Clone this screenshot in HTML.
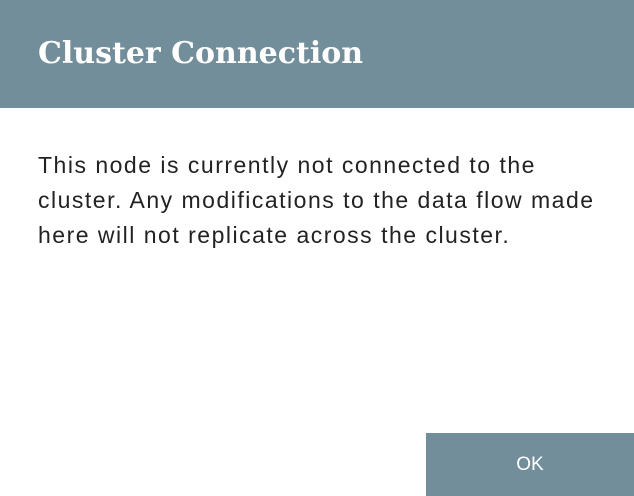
<!DOCTYPE html>
<html><head><style>
html,body{margin:0;padding:0;width:634px;height:496px;overflow:hidden;background:#fff;}
.hdr{position:absolute;left:0;top:0;width:634px;height:108px;background:#728e9b;}
.hdr h1{margin:0;position:absolute;left:38px;top:34px;font-family:"DejaVu Serif","Liberation Serif",serif;font-weight:bold;font-size:30px;color:#fff;line-height:40px;}
.body{position:absolute;left:38px;top:148px;width:596px;font-family:"Liberation Sans",sans-serif;font-size:23px;letter-spacing:1.5px;line-height:35px;color:#222;white-space:nowrap;}
.btn{position:absolute;left:426px;top:433px;width:208px;height:63px;background:#728e9b;color:#fff;font-family:"Liberation Sans",sans-serif;font-size:19px;display:flex;align-items:center;justify-content:center;}
</style></head><body>
<div class="hdr"><h1>Cluster Connection</h1></div>
<div class="body">This node is currently not connected to the<br>cluster. Any modifications to the data flow made<br>here will not replicate across the cluster.</div>
<div class="btn">OK</div>
</body></html>
